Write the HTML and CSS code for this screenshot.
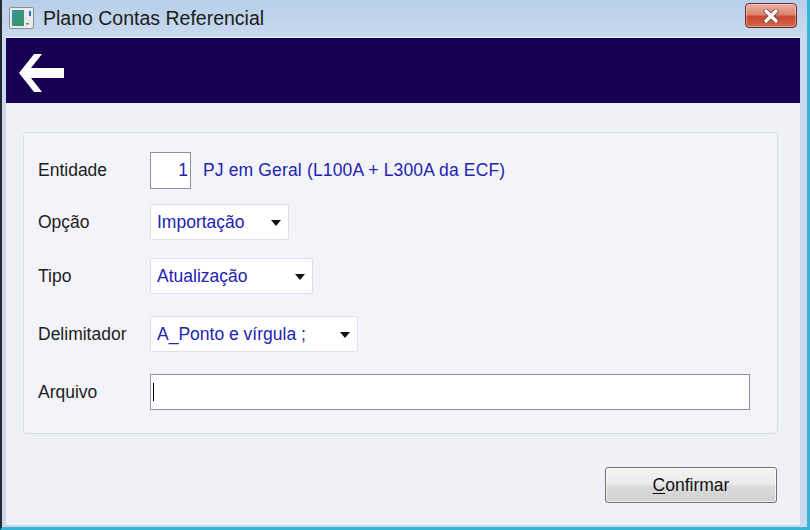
FILE: index.html
```html
<!DOCTYPE html>
<html lang="pt">
<head>
<meta charset="utf-8">
<title>Plano Contas Referencial</title>
<link rel="stylesheet" href="styles.css">
</head>
<body>
<div class="window">
  <div class="titlebar">
    <svg class="app-icon" width="25" height="22" viewBox="0 0 25 22">
      <defs>
        <linearGradient id="ig" x1="0" y1="0" x2="1" y2="1">
          <stop offset="0" stop-color="#3f8fa0"/>
          <stop offset="1" stop-color="#2f9a5a"/>
        </linearGradient>
      </defs>
      <rect x="0.5" y="0.5" width="24" height="21" rx="1.5" fill="#e9ebee" stroke="#8b8e93"/>
      <rect x="3" y="3" width="12" height="16" fill="url(#ig)"/>
      <rect x="20" y="4" width="2" height="5" fill="#2d6fd0"/>
      <rect x="17" y="16" width="3" height="1.5" fill="#7d8084"/>
    </svg>
    <span class="title">Plano Contas Referencial</span>
    <button class="close" type="button" aria-label="Fechar">
      <svg width="22" height="14" viewBox="0 0 22 14">
        <path d="M6 2 L16 12 M16 2 L6 12" stroke="#6b4a45" stroke-width="5" stroke-linecap="round" fill="none"/>
        <path d="M6 2 L16 12 M16 2 L6 12" stroke="#ffffff" stroke-width="3.2" stroke-linecap="round" fill="none"/>
      </svg>
    </button>
  </div>
  <div class="frame">
    <div class="client">
      <div class="header">
        <svg class="back" width="52" height="44" viewBox="0 0 52 44">
          <path d="M3 22 L18 3 L26 3 L15 17 L48 17 L48 27 L15 27 L26 41 L18 41 Z" fill="#ffffff"/>
        </svg>
      </div>
      <div class="content">
        <div class="panel">
          <div class="row row-1">
            <span class="label">Entidade</span>
            <span class="code">1</span>
            <span class="desc">PJ em Geral (L100A + L300A da ECF)</span>
          </div>
          <div class="row row-2">
            <span class="label">Opção</span>
            <div class="select w-opcao"><span class="sel-text">Importação</span><span class="caret"></span></div>
          </div>
          <div class="row row-3">
            <span class="label">Tipo</span>
            <div class="select w-tipo"><span class="sel-text">Atualização</span><span class="caret"></span></div>
          </div>
          <div class="row row-4">
            <span class="label">Delimitador</span>
            <div class="select w-delim"><span class="sel-text">A_Ponto e vírgula ;</span><span class="caret"></span></div>
          </div>
          <div class="row row-5">
            <span class="label">Arquivo</span>
            <div class="input"><span class="cursor"></span></div>
          </div>
        </div>
        <div class="actions">
          <button class="btn" type="button"><u>C</u>onfirmar</button>
        </div>
      </div>
    </div>
  </div>
</div>
</body>
</html>
```

FILE: styles.css
```css
* { box-sizing: border-box; }
html, body { margin: 0; padding: 0; }
body {
  width: 810px;
  height: 530px;
  overflow: hidden;
  font-family: "Liberation Sans", Arial, sans-serif;
  background: #c4d7ed;
}
.window {
  width: 810px;
  height: 530px;
  display: flex;
  flex-direction: column;
  border-left: 2px solid #262a30;
  border-right: 3px solid #35b6d6;
  border-bottom: 3px solid #35b6d6;
  background: linear-gradient(#b8cfe9, #c9daee 40px, #c9daee);
}
.titlebar {
  height: 37px;
  flex: none;
  display: flex;
  align-items: center;
  padding-left: 7px;
  padding-right: 10px;
}
.app-icon { flex: none; margin-top: -1px; }
.title {
  margin-left: 9px;
  font-size: 19.5px;
  color: #1b1b1b;
  flex: 1;
  margin-top: -1px;
}
.close {
  width: 52px;
  height: 25px;
  margin-top: -6px;
  border: 1px solid #6a2b2b;
  border-radius: 4px;
  background: linear-gradient(#eab0a2, #dd8470 45%, #c9472d 55%, #d5684c);
  box-shadow: inset 0 0 0 1px rgba(255,255,255,0.35);
  display: flex;
  align-items: center;
  justify-content: center;
  padding: 0;
}
.frame {
  flex: 1;
  display: flex;
  padding: 0 7px 2px 4px;
}
.client {
  flex: 1;
  display: flex;
  flex-direction: column;
  border-top: 1px solid #eef3fa;
  background: #eff1f7;
}
.header {
  height: 65px;
  flex: none;
  background: #170052;
  padding: 13px 0 0 10px;
}
.back { display: block; }
.content {
  flex: 1;
  padding: 29px 22px 0 17px;
  display: flex;
  flex-direction: column;
}
.panel {
  border: 1px solid #d9dde5;
  border-radius: 4px;
  background: #f3f4f9;
  padding: 19px 0 23px 14px;
  display: flex;
  flex-direction: column;
}
.row {
  display: flex;
  align-items: center;
  height: 36px;
}
.row-1 { height: 37px; }
.row-2 { margin-top: 15px; }
.row-3 { margin-top: 18px; }
.row-4 { margin-top: 22px; }
.row-5 { margin-top: 22px; }
.label {
  width: 112px;
  flex: none;
  font-size: 17.5px;
  color: #1c1c1c;
}
.code {
  width: 41px;
  height: 37px;
  border: 1px solid #8e9094;
  background: #ffffff;
  color: #2222b0;
  font-size: 17.5px;
  display: flex;
  align-items: center;
  justify-content: flex-end;
  padding-right: 2px;
}
.desc {
  margin-left: 12px;
  color: #2323b2;
  font-size: 17.5px;
  letter-spacing: 0.15px;
}
.select {
  height: 36px;
  border: 1px solid #dcdfe6;
  border-radius: 2px;
  background: #ffffff;
  display: flex;
  align-items: center;
  justify-content: space-between;
  padding: 0 7px 0 6px;
}
.w-opcao { width: 139px; }
.w-tipo { width: 163px; }
.w-delim { width: 208px; }
.sel-text {
  color: #2323b2;
  font-size: 17.5px;
  white-space: nowrap;
}
.caret {
  width: 0;
  height: 0;
  border-left: 5.5px solid transparent;
  border-right: 5.5px solid transparent;
  border-top: 6px solid #111111;
  margin-top: 2px;
}
.input {
  width: 600px;
  height: 36px;
  border: 1px solid #8f9196;
  background: #ffffff;
  display: flex;
  align-items: center;
  padding-left: 2px;
}
.cursor {
  width: 1px;
  height: 18px;
  background: #000000;
}
.actions {
  display: flex;
  justify-content: flex-end;
  margin-top: 33px;
  padding-right: 1px;
}
.btn {
  width: 172px;
  height: 36px;
  border: 1px solid #707070;
  border-radius: 3px;
  background: linear-gradient(#f3f3f3, #ebebeb 48%, #dddddd 52%, #cfcfcf);
  box-shadow: inset 0 0 0 1px rgba(255,255,255,0.7);
  font-family: "Liberation Sans", Arial, sans-serif;
  font-size: 17.5px;
  color: #111111;
  padding: 0;
}
.btn u { text-decoration-thickness: 1px; text-underline-offset: 2px; }
```
